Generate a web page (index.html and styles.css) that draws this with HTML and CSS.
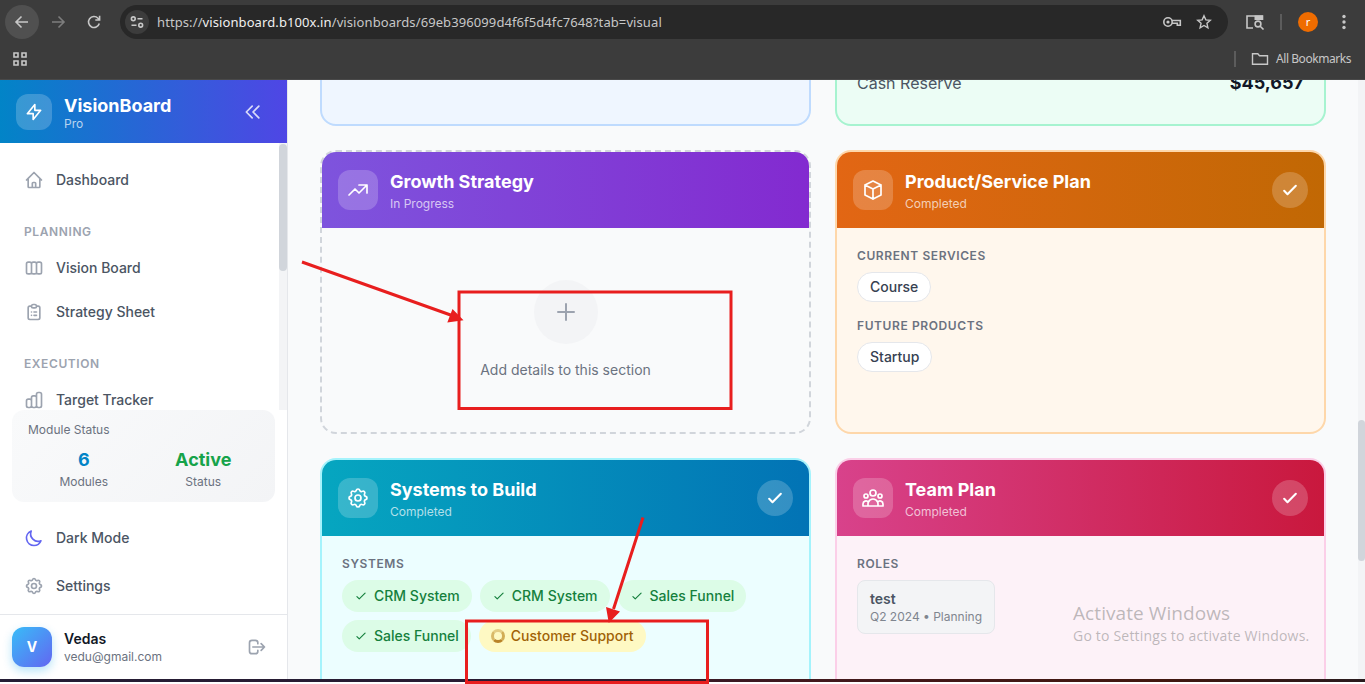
FILE: index.html
```html
<!DOCTYPE html>
<html lang="en">
<head>
<meta charset="utf-8">
<title>VisionBoard Pro</title>
<link rel="stylesheet" href="styles.css">
</head>
<body>
<svg class="defs" aria-hidden="true">
  <symbol id="cog" viewBox="0 0 24 24"><path d="M10.325 4.317c.426-1.756 2.924-1.756 3.35 0a1.724 1.724 0 002.573 1.066c1.543-.94 3.31.826 2.37 2.37a1.724 1.724 0 001.065 2.572c1.756.426 1.756 2.924 0 3.35a1.724 1.724 0 00-1.066 2.573c.94 1.543-.826 3.31-2.37 2.37a1.724 1.724 0 00-2.572 1.065c-.426 1.756-2.924 1.756-3.35 0a1.724 1.724 0 00-2.573-1.066c-1.543.94-3.31-.826-2.37-2.37a1.724 1.724 0 00-1.065-2.572c-1.756-.426-1.756-2.924 0-3.35a1.724 1.724 0 001.066-2.573c-.94-1.543.826-3.31 2.37-2.37.996.608 2.296.07 2.572-1.065zM15 12a3 3 0 11-6 0 3 3 0 016 0z"/></symbol>
  <symbol id="check" viewBox="0 0 24 24"><path d="M5 13l4 4L19 7"/></symbol>
</svg>

<header class="browser">
  <div class="toolbar">
    <span class="nav-btn nav-back"><svg class="glyph" viewBox="0 0 16 16"><path d="M14 8H2.500M7.500 2.500L2 8l5.500 5.500"/></svg></span>
    <span class="nav-btn nav-forward"><svg class="glyph" viewBox="0 0 16 16"><path d="M2 8h11.500M8.500 2.500L14 8l-5.500 5.500"/></svg></span>
    <span class="nav-btn nav-reload"><svg class="glyph" viewBox="0 0 16 16"><path d="M13.300 9.500A5.500 5.500 0 1 1 12 4.200l1.500 1.500M13.600 1.800V6H9.300"/></svg></span>
    <div class="omnibox">
      <span class="site-info"><svg class="glyph" viewBox="0 0 16 16"><circle cx="4.300" cy="4.800" r="1.900"/><path d="M8.500 4.800h5M2.500 11.200h5"/><circle cx="11.700" cy="11.200" r="1.900"/></svg></span>
      <span class="url">https://<b>visionboard.b100x.in</b>/visionboards/69eb396099d4f6f5d4fc7648?tab=visual</span>
      <svg class="key" viewBox="0 0 20 14"><circle cx="6" cy="7" r="4.200"/><circle class="fill" cx="6" cy="7" r="1.600"/><path d="M10 5.500h8.300v4.800h-3V8.300h-5.300"/></svg>
      <svg class="glyph star" viewBox="0 0 16 16"><path d="M8 1.800l1.850 4.100 4.450.45-3.350 3 .95 4.400L8 11.500l-3.900 2.250.95-4.400-3.350-3 4.450-.45z"/></svg>
    </div>
    <svg class="side-search" viewBox="0 0 20 16"><path d="M8 14H2V2h15.500v4M2 2v12"/><path class="fill" d="M9.500 1.500h8.500V6H9.500z"/><circle cx="13" cy="10" r="2.900"/><path d="M15.200 12.200l3.300 3.300"/></svg>
    <span class="bar-line"></span>
    <span class="profile">r</span>
    <svg class="dots" viewBox="0 0 4 16"><circle cx="2" cy="2.500" r="1.700"/><circle cx="2" cy="8" r="1.700"/><circle cx="2" cy="13.500" r="1.700"/></svg>
  </div>
  <div class="bookmarks">
    <svg class="apps" viewBox="0 0 16 16"><path d="M2 2h4v4H2zM10 2h4v4h-4zM2 10h4v4H2zM10 10h4v4h-4z"/></svg>
    <span class="bar-line bookmark-line"></span>
    <svg class="folder" viewBox="0 0 18 14"><path d="M1.500 1.800h5.300l1.700 2h8V12.200h-15z"/></svg>
    <span class="bookmark-label">All Bookmarks</span>
  </div>
</header>

<div class="app">
  <aside class="sidebar">
    <div class="brand">
      <span class="brand-logo"><svg class="icon" viewBox="0 0 24 24"><path d="M13 10V3L4 14h7v7l9-11h-7z"/></svg></span>
      <div class="brand-text"><div class="brand-name">VisionBoard</div><div class="brand-tier">Pro</div></div>
      <svg class="icon collapse" viewBox="0 0 24 24"><path d="M11 19l-7-7 7-7m8 14l-7-7 7-7"/></svg>
    </div>
    <div class="nav-scroll">
      <nav class="nav">
        <a class="nav-item"><svg class="icon" viewBox="0 0 24 24"><path d="M3 12l2-2m0 0l7-7 7 7M5 10v10a1 1 0 001 1h3m10-11l2 2m-2-2v10a1 1 0 01-1 1h-3m-6 0a1 1 0 001-1v-4a1 1 0 011-1h2a1 1 0 011 1v4a1 1 0 001 1m-6 0h6"/></svg>Dashboard</a>
        <div class="nav-heading">PLANNING</div>
        <a class="nav-item"><svg class="icon" viewBox="0 0 24 24"><path d="M9 17V7m0 10a2 2 0 01-2 2H5a2 2 0 01-2-2V7a2 2 0 012-2h2a2 2 0 012 2m0 10a2 2 0 002 2h2a2 2 0 002-2M9 7a2 2 0 012-2h2a2 2 0 012 2m0 10V7m0 10a2 2 0 002 2h2a2 2 0 002-2V7a2 2 0 00-2-2h-2a2 2 0 00-2 2"/></svg>Vision Board</a>
        <a class="nav-item"><svg class="icon" viewBox="0 0 24 24"><path d="M9 5H7a2 2 0 00-2 2v12a2 2 0 002 2h10a2 2 0 002-2V7a2 2 0 00-2-2h-2M9 5a2 2 0 002 2h2a2 2 0 002-2M9 5a2 2 0 012-2h2a2 2 0 012 2m-3 7h3m-3 4h3m-6-4h.01M9 16h.01"/></svg>Strategy Sheet</a>
        <div class="nav-heading">EXECUTION</div>
        <a class="nav-item"><svg class="icon" viewBox="0 0 24 24"><path d="M9 19v-6a2 2 0 00-2-2H5a2 2 0 00-2 2v6a2 2 0 002 2h2a2 2 0 002-2zm0 0V9a2 2 0 012-2h2a2 2 0 012 2v10m-6 0a2 2 0 002 2h2a2 2 0 002-2m0 0V5a2 2 0 012-2h2a2 2 0 012 2v14a2 2 0 01-2 2h-2a2 2 0 01-2-2z"/></svg>Target Tracker</a>
      </nav>
      <div class="track nav-track"><div class="thumb nav-thumb"></div></div>
    </div>
    <section class="status">
      <div class="status-title">Module Status</div>
      <div class="status-grid">
        <div><div class="status-value value-blue">6</div><div class="status-label">Modules</div></div>
        <div><div class="status-value value-green">Active</div><div class="status-label">Status</div></div>
      </div>
    </section>
    <div class="tools">
      <a class="tool-item"><svg class="icon moon" viewBox="0 0 24 24"><path d="M20.354 15.354A9 9 0 018.646 3.646 9.003 9.003 0 0012 21a9.003 9.003 0 008.354-5.646z"/></svg>Dark Mode</a>
      <a class="tool-item"><svg class="icon"><use href="#cog"/></svg>Settings</a>
    </div>
    <footer class="user">
      <span class="avatar">V</span>
      <div class="user-text"><div class="user-name">Vedas</div><div class="user-mail">vedu@gmail.com</div></div>
      <svg class="icon logout" viewBox="0 0 24 24"><path d="M17 16l4-4m0 0l-4-4m4 4H7m6 4v1a3 3 0 01-3 3H6a3 3 0 01-3-3V7a3 3 0 013-3h4a3 3 0 013 3v1"/></svg>
    </footer>
  </aside>

  <main class="board">
    <div class="row row-cut">
      <article class="card card-blue"></article>
      <article class="card card-mint"><div class="reserve"><span>Cash Reserve</span><strong>$45,657</strong></div></article>
    </div>
    <div class="row row-mid">
      <article class="card card-growth">
        <div class="card-head">
          <span class="card-icon"><svg class="icon" viewBox="0 0 24 24"><path d="M13 7h8m0 0v8m0-8l-8 8-4-4-6 6"/></svg></span>
          <div class="card-text"><h2>Growth Strategy</h2><p>In Progress</p></div>
        </div>
        <div class="empty">
          <span class="plus"><svg class="icon" viewBox="0 0 24 24"><path d="M12 4v16m8-8H4"/></svg></span>
          <p>Add details to this section</p>
        </div>
      </article>
      <article class="card card-product">
        <div class="card-head">
          <span class="card-icon"><svg class="icon" viewBox="0 0 24 24"><path d="M20 7l-8-4-8 4m16 0l-8 4m8-4v10l-8 4m0-10L4 7m8 4v10M4 7v10l8 4"/></svg></span>
          <div class="card-text"><h2>Product/Service Plan</h2><p>Completed</p></div>
          <span class="done"><svg class="icon"><use href="#check"/></svg></span>
        </div>
        <div class="card-body">
          <h3>CURRENT SERVICES</h3>
          <div class="chips"><span class="chip-plain">Course</span></div>
          <h3 class="next-group">FUTURE PRODUCTS</h3>
          <div class="chips"><span class="chip-plain">Startup</span></div>
        </div>
      </article>
    </div>
    <div class="row row-low">
      <article class="card card-systems">
        <div class="card-head">
          <span class="card-icon"><svg class="icon"><use href="#cog"/></svg></span>
          <div class="card-text"><h2>Systems to Build</h2><p>Completed</p></div>
          <span class="done"><svg class="icon"><use href="#check"/></svg></span>
        </div>
        <div class="card-body">
          <h3>SYSTEMS</h3>
          <div class="chips">
            <span class="chip"><svg class="icon"><use href="#check"/></svg>CRM System</span>
            <span class="chip"><svg class="icon"><use href="#check"/></svg>CRM System</span>
            <span class="chip"><svg class="icon"><use href="#check"/></svg>Sales Funnel</span>
            <span class="chip"><svg class="icon"><use href="#check"/></svg>Sales Funnel</span>
            <span class="chip chip-wait"><span class="ring"></span>Customer Support</span>
          </div>
        </div>
      </article>
      <article class="card card-team">
        <div class="card-head">
          <span class="card-icon"><svg class="icon" viewBox="0 0 24 24"><path d="M17 20h5v-2a3 3 0 00-5.356-1.857M17 20H7m10 0v-2c0-.656-.126-1.283-.356-1.857M7 20H2v-2a3 3 0 015.356-1.857M7 20v-2c0-.656.126-1.283.356-1.857m0 0a5.002 5.002 0 019.288 0M15 7a3 3 0 11-6 0 3 3 0 016 0zm6 3a2 2 0 11-4 0 2 2 0 014 0zM7 10a2 2 0 11-4 0 2 2 0 014 0z"/></svg></span>
          <div class="card-text"><h2>Team Plan</h2><p>Completed</p></div>
          <span class="done"><svg class="icon"><use href="#check"/></svg></span>
        </div>
        <div class="card-body">
          <h3>ROLES</h3>
          <div class="role"><div class="role-name">test</div><div class="role-meta">Q2 2024 • Planning</div></div>
        </div>
      </article>
    </div>
  </main>
  <div class="track page-track"><div class="thumb page-thumb"></div></div>
</div>
<div class="taskbar"></div>

<div class="watermark"><div class="wm-title">Activate Windows</div><div class="wm-sub">Go to Settings to activate Windows.</div></div>

<svg class="markup" viewBox="0 0 1365 684" aria-hidden="true">
  <rect x="459" y="292" width="272" height="116.500"/>
  <rect x="466.500" y="621" width="241" height="61.500"/>
  <path d="M302 262L452 315.500M643 517.500L613.500 609"/>
  <path class="head" d="M463.500 320.300L452.500 309 447.300 322.500zM608.800 623L606 607 620 611.500z"/>
</svg>
</body>
</html>
```

FILE: styles.css
```css
* { box-sizing: border-box; }
body {
  margin: 0;
  height: 684px;
  overflow: hidden;
  background: #fff;
  font-family: Inter, "Liberation Sans", sans-serif;
  font-size: 14px;
  line-height: 20px;
}
h2, h3, p { margin: 0; }
.defs { display: none; }
.icon {
  width: 20px;
  height: 20px;
  flex: none;
  fill: none;
  color: inherit;
  stroke: currentColor;
  stroke-width: 2;
  stroke-linecap: round;
  stroke-linejoin: round;
}

/* Browser chrome */
.browser {
  height: 80px;
  background: #3c3c3c;
  border-bottom: 1px solid #494949;
  color: #c7c7c7;
  font-family: "Noto Sans", "Open Sans", sans-serif;
}
.toolbar { display: flex; align-items: center; height: 44px; padding: 0 19px 0 5px; }
.browser svg { flex: none; fill: none; stroke: currentColor; stroke-width: 1.6; }
.browser svg .fill { fill: currentColor; stroke: none; }
.glyph { width: 16px; height: 16px; }
.nav-btn { display: grid; flex: none; place-items: center; width: 34px; height: 34px; border-radius: 50%; }
.nav-back { background: #505050; }
.nav-forward { margin-left: 2px; color: #7d7d7d; }
.nav-reload { margin-left: 2px; }
.omnibox {
  display: flex;
  flex: none;
  align-items: center;
  width: 1108px;
  height: 34px;
  margin-left: 9px;
  padding: 0 16px 0 5px;
  border-radius: 17px;
  background: #282828;
}
.site-info { display: grid; place-items: center; width: 24px; height: 24px; border-radius: 50%; background: #3c3c3c; }
.url { flex: 1; margin-left: 8px; font-size: 13px; letter-spacing: 0.095px; white-space: nowrap; }
.url b { font-weight: 400; color: #f0f0f0; }
.key { width: 20px; height: 14px; }
.omnibox .star { margin-left: 14px; stroke-width: 1.4; }
.side-search { width: 20px; height: 16px; margin-left: 17px; }
.bar-line { width: 2px; height: 16px; margin-left: 15px; background: #5c5c5c; }
.profile {
  display: grid;
  place-items: center;
  width: 20px;
  height: 20px;
  margin-left: 16px;
  border-radius: 50%;
  background: #ef6c00;
  color: #fff;
  font-size: 11px;
  line-height: 16px;
}
.browser .dots { width: 4px; height: 16px; margin-left: 24px; fill: currentColor; stroke: none; }
.bookmarks { display: flex; align-items: center; height: 30px; padding: 0 13px 0 12px; }
.apps { width: 16px; height: 16px; }
.bookmark-line { margin-left: auto; }
.browser .folder { width: 18px; height: 14px; margin: 0 7px 0 15px; stroke-width: 1.4; }
.bookmark-label { width: 76px; font-size: 12px; letter-spacing: -0.44px; white-space: nowrap; }

/* Application frame */
.app { display: flex; height: 599px; overflow: hidden; background: #f9fafb; }
.sidebar {
  display: flex;
  flex: none;
  flex-direction: column;
  width: 288px;
  border-right: 1px solid #e5e7eb;
  background: #fff;
}
.brand {
  display: flex;
  flex: none;
  align-items: center;
  height: 63px;
  padding: 0 24px 0 16px;
  background: linear-gradient(to right, #0284c7, #4f46e5);
  color: #fff;
}
.brand-logo { display: grid; place-items: center; width: 36px; height: 36px; border-radius: 12px; background: rgba(255, 255, 255, 0.2); }
.brand-text { flex: 1; margin-left: 12px; padding-top: 2px; }
.brand-name { font-size: 18px; font-weight: 700; line-height: 22px; }
.brand-tier { font-size: 12px; line-height: 14px; color: rgba(255, 255, 255, 0.7); }
.collapse { color: rgba(255, 255, 255, 0.8); }
.nav-scroll { display: flex; flex: none; height: 267px; overflow: hidden; }
.nav { flex: 1; padding-top: 15px; }
.nav-item, .tool-item { display: flex; align-items: center; gap: 12px; padding: 0 24px; color: #4b5563; font-weight: 500; }
.nav-item { height: 44px; }
.nav-item .icon, .tool-item .icon, .logout { color: #9ca3af; }
.nav-heading { margin: 22px 24px 6px; font-size: 12px; font-weight: 600; line-height: 16px; letter-spacing: 0.6px; color: #9ca3af; }
.track { flex: none; background: #f3f4f6; }
.thumb { border-radius: 4px; background: #d1d5db; }
.nav-track { width: 8px; padding-top: 1px; }
.nav-thumb { height: 127px; }
.status {
  flex: none;
  height: 92px;
  margin: 0 12px;
  padding: 12px 16px;
  border-radius: 12px;
  background: linear-gradient(135deg, #f9fafb, #f3f4f6);
  color: #6b7280;
}
.status-title { font-size: 12px; line-height: 16px; }
.status-grid { display: grid; grid-template-columns: 1fr 1fr; gap: 8px; margin-top: 8px; text-align: center; }
.status-value { font-size: 18px; font-weight: 700; line-height: 28px; }
.value-blue { color: #0284c7; }
.value-green { color: #16a34a; }
.status-label { font-size: 12px; line-height: 16px; }
.tools { flex: 1; padding-top: 14px; }
.tool-item { height: 44px; margin-bottom: 4px; }
.tool-item .moon { color: #6366f1; }
.user { display: flex; flex: none; align-items: center; height: 65px; padding: 0 20px 0 12px; border-top: 1px solid #e5e7eb; }
.avatar {
  display: grid;
  place-items: center;
  width: 40px;
  height: 40px;
  border-radius: 12px;
  background: linear-gradient(135deg, #38bdf8, #6366f1);
  box-shadow: 0 4px 10px rgba(14, 165, 233, 0.3);
  color: #fff;
  font-size: 14px;
  font-weight: 700;
}
.user-text { flex: 1; margin-left: 12px; }
.user-name { color: #111827; font-weight: 600; }
.user-mail { font-size: 12px; line-height: 16px; color: #6b7280; }

/* Board */
.board { flex: 1; padding: 0 32px; overflow: hidden; }
.row { display: grid; grid-template-columns: 1fr 1fr; gap: 24px; margin-bottom: 24px; }
.row-cut { height: 46px; align-content: end; }
.row-cut .card { height: 72px; }
.row-mid { height: 284px; }
.row-low { height: 236px; }
.card { display: flex; flex-direction: column; border: 2px solid; border-radius: 16px; overflow: hidden; }
.card-blue { border-color: #bfdbfe; background: #eff6ff; }
.card-mint { border-color: #a7f3d0; background: #ecfdf5; }
.card-growth { border: 2px dashed #d1d5db; }
.card-product { border-color: #fed7aa; background: #fff7ed; }
.card-systems { border-color: #a5f3fc; background: #ecfeff; }
.card-team { border-color: #fbcfe8; background: #fdf2f8; }
.reserve { display: flex; justify-content: space-between; align-items: center; padding: 13px 20px 0; font-size: 16px; line-height: 28px; color: #4b5563; }
.reserve strong { font-size: 18px; font-weight: 700; color: #111827; }
.card-head { display: flex; flex: none; align-items: center; height: 76px; padding: 0 16px; color: #fff; }
.card-growth .card-head { background: linear-gradient(to right, #7e54dd, #832ad0); }
.card-product .card-head { background: linear-gradient(to right, #e26614, #c16804); }
.card-systems .card-head { background: linear-gradient(to right, #06a6c0, #0273b5); }
.card-team .card-head { background: linear-gradient(to right, #d8428b, #c9183d); }
.card-icon { display: grid; place-items: center; width: 40px; height: 40px; border-radius: 12px; background: rgba(255, 255, 255, 0.2); }
.card-icon .icon { width: 24px; height: 24px; stroke-width: 1.7; }
.card-text { flex: 1; margin-left: 12px; }
h2 { font-size: 18px; font-weight: 700; line-height: 28px; }
.card-text p { font-size: 12px; line-height: 16px; color: rgba(255, 255, 255, 0.7); }
.done { display: grid; place-items: center; width: 36px; height: 36px; border-radius: 50%; background: rgba(255, 255, 255, 0.2); }
.done .icon { stroke-width: 2.5; }
.card-body { padding: 20px; }
h3 { margin-bottom: 8px; font-size: 12px; font-weight: 600; line-height: 16px; letter-spacing: 0.6px; color: #6b7280; }
.next-group { margin-top: 16px; }
.chips { display: flex; flex-wrap: wrap; gap: 8px; }
.chip-plain { padding: 4px 12px; border: 1px solid #e5e7eb; border-radius: 15px; background: #fff; color: #374151; font-weight: 500; }
.chip { display: flex; align-items: center; gap: 6px; padding: 6px 12px; border-radius: 16px; background: #dcfce7; color: #15803d; font-weight: 500; }
.chip .icon { width: 14px; height: 14px; }
.chip-wait { background: #fef9c3; color: #a16207; }
.ring { width: 14px; height: 14px; border: 3px solid; border-color: #e4cc83 #d2ac54 #b98328 #d9b968; border-radius: 50%; }
.role { width: fit-content; padding: 8px 12px; border: 1px solid #e5e7eb; border-radius: 8px; background: #f3f4f6; }
.role-name { color: #4b5563; font-weight: 600; }
.role-meta { font-size: 12px; line-height: 16px; color: #7f858f; }
.empty { display: flex; flex: 1; flex-direction: column; align-items: center; justify-content: center; gap: 16px; color: #6b7280; }
.plus { display: grid; place-items: center; width: 64px; height: 64px; border-radius: 50%; background: #f3f4f6; color: #9ca3af; }
.plus .icon { width: 24px; height: 24px; }
.page-track { width: 7px; padding-top: 340px; }
.page-thumb { height: 141px; }
.taskbar { height: 3px; background: linear-gradient(to right, #241d35, #2a1b32 40%, #43191d 60%, #42170f 85%, #2a1b1e); }

/* Layers above the page */
.watermark { position: absolute; left: 1073px; top: 601px; font-family: "Open Sans", "Noto Sans", sans-serif; color: rgba(125, 125, 125, 0.5); white-space: nowrap; }
.wm-title { font-size: 19px; line-height: 24px; letter-spacing: 0.08px; }
.wm-sub { font-size: 14px; line-height: 21px; letter-spacing: 0.2px; }
.markup { position: absolute; left: 0; top: 0; width: 1365px; height: 684px; fill: none; stroke: #e81e1e; stroke-width: 3; pointer-events: none; }
.markup .head { fill: #e81e1e; stroke: none; }
```
